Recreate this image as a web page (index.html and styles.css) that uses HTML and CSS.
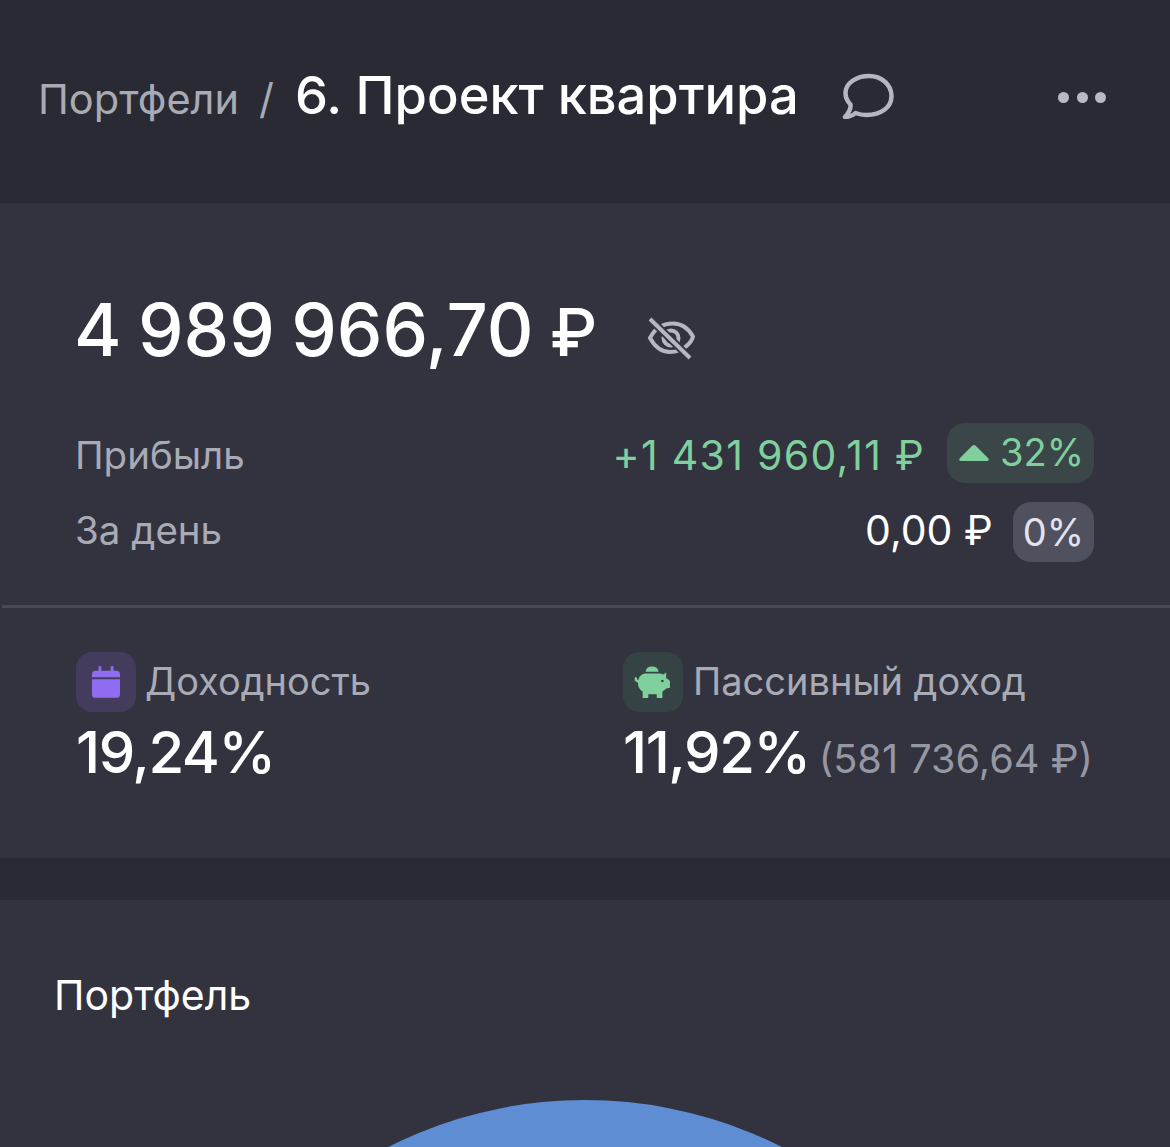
FILE: index.html
```html
<!DOCTYPE html>
<html lang="ru">
<head>
  <meta charset="UTF-8" />
  <title>Портфель</title>
  <link rel="stylesheet" href="styles.css">
</head>
<body>

  <!-- Header -->
  <div class="header">
    <span class="crumb">Портфели</span>
    <span class="slash">/</span>
    <span class="title">6. Проект квартира</span>
    <svg class="chat-icon" width="54" height="46" viewBox="0 0 54 46" fill="none">
      <path d="M3 44c4 0 7.500-1 10.500-4 3.500 1.300 7 2 11 2 14.500 0 25-7.500 25-19S39.500 3 27 3 3.500 10 3.500 20c0 4.500 1.500 8 5 11.500 .5 4-1.500 8-5.500 12.500z" stroke="#b5b7c0" stroke-width="4.500" stroke-linejoin="round"/>
    </svg>
    <div class="dots"><i></i><i></i><i></i></div>
  </div>

  <!-- Summary -->
  <div class="panel summary">
    <div class="total-row">
      <span class="total">4 989 966,70 <span class="rub">₽</span></span>
      <svg class="eye-icon" width="50" height="44" viewBox="0 0 50 44" fill="none" stroke="#b5b6c0">
        <path d="M3 21C8 11 16 6.500 26 6.500c8 0 15 4 20 13-1 4-3.500 7-6.500 9.500-5 4.500-10.500 6-16.500 6-9 0-15-5-20-14z" stroke-width="4"/>
        <circle cx="24" cy="21" r="7.500" stroke-width="4"/>
        <path d="M3 2l40 39" stroke="#32333e" stroke-width="8"/>
        <path d="M3 2l40 39" stroke-width="4"/>
      </svg>
    </div>

    <div class="stat-row profit-row">
      <span class="stat-label">Прибыль</span>
      <span class="stat-value green">+1 431 960,11 ₽</span>
      <span class="badge badge-green">
        <svg width="32" height="18" viewBox="0 0 32 18"><path d="M14 2q2-2 4 0L30 14q2 3-1 3H3q-3 0-1-3z" fill="#7fd09d"/></svg>
        <span class="badge-text">32%</span>
      </span>
    </div>
    <div class="stat-row day-row">
      <span class="stat-label">За день</span>
      <span class="stat-value">0,00 ₽</span>
      <span class="badge badge-gray"><span class="badge-text">0%</span></span>
    </div>

    <div class="divider"></div>

    <div class="metrics">
      <div class="metric metric-yield">
        <div class="metric-head">
          <span class="metric-icon icon-purple">
            <svg width="28" height="32" viewBox="0 0 30 34"><path d="M7 0h3v5h10V0h3v5h3q4 0 4 4v3H0V9q0-4 4-4h3zM0 14h30v16q0 4-4 4H4q-4 0-4-4z" fill="#8f6cf0"/></svg>
          </span>
          <span class="metric-label">Доходность</span>
        </div>
        <div class="metric-value">19,24%</div>
      </div>
      <div class="metric">
        <div class="metric-head">
          <span class="metric-icon icon-green">
            <svg width="38" height="32" viewBox="0 0 40 34" fill="#7fd09d">
              <path d="M12 6q1-5.500 7-5.500T26 6z"/>
              <path d="M11 8h15q3 0 5 1l3-2v6q3 1 4 3v7l-4 1q-2 2-4 3v7h-6v-4h-9v4h-6v-7q-5-3-5-9 0-8 7-10z"/>
              <path d="M6 16c-3 1-5-1-4-4" fill="none" stroke="#7fd09d" stroke-width="2.500"/>
              <circle cx="30" cy="16" r="1.300" fill="#2f3d3d"/>
            </svg>
          </span>
          <span class="metric-label">Пассивный доход</span>
        </div>
        <div class="metric-value">11,92% <small>(581 736,64 ₽)</small></div>
      </div>
    </div>
  </div>

  <!-- Portfolio -->
  <div class="panel portfolio">
    <h2>Портфель</h2>
    <div class="pie"></div>
  </div>

</body>
</html>
```

FILE: styles.css
```css
* {
  margin: 0;
  padding: 0;
  box-sizing: border-box;
  font-family: 'Inter', 'Noto Sans', sans-serif;
}

html, body {
  height: 100%;
  overflow: hidden;
}

body {
  background: #292a34;
  color: white;
}

.header {
  display: flex;
  align-items: center;
  height: 203px;
  padding: 0 64px 12px 38px;
  background: #292a33;
}

.crumb {
  font-size: 41.5px;
  color: #a9abb4;
  margin-top: 6px;
}

.slash {
  font-size: 41.5px;
  color: #a9abb4;
  margin: 6px 21px 0 20px;
}

.title {
  font-size: 52.4px;
  font-weight: 500;
  margin-bottom: 2px;
}

.chat-icon {
  margin-left: 43px;
}

.dots {
  display: flex;
  gap: 7.5px;
  margin: 3px 0 0 auto;
}

.dots i {
  width: 11px;
  height: 11px;
  border-radius: 50%;
  background: #b8bac3;
}

.panel {
  background: #32333e;
}

.summary {
  height: 655px;
  padding-top: 84px;
}

.total-row {
  display: flex;
  align-items: center;
  height: 84px;
  padding-left: 74px;
}

.total {
  font-size: 72.5px;
  font-weight: 500;
  word-spacing: -3px;
}

.total .rub {
  font-size: 66px;
}

.eye-icon {
  margin: 19px 0 0 50px;
}

.stat-row {
  display: flex;
  align-items: center;
  height: 60px;
  padding: 0 76px;
}

.profit-row {
  margin-top: 52px;
}

.day-row {
  margin-top: 19px;
}

.stat-label {
  font-size: 38.5px;
  color: #a8abb5;
  margin-left: -1px;
  margin-right: auto;
}

.profit-row .stat-label {
  margin-top: 4px;
}

.day-row .stat-label {
  margin-bottom: 4px;
}

.stat-value {
  font-size: 41px;
}

.profit-row .stat-value {
  margin-top: 4px;
}

.day-row .stat-value {
  margin-bottom: 4px;
  margin-right: -2px;
}

.green {
  color: #7fd09d;
  letter-spacing: 1.3px;
}

.badge {
  display: flex;
  align-items: center;
  gap: 10px;
  height: 60px;
  margin-left: 22px;
  padding: 0 10px 0 11px;
  border-radius: 18px;
  font-size: 38px;
}

.badge-green {
  background: #3a4648;
  color: #7fd09d;
}

.badge-green .badge-text {
  margin-bottom: 3px;
}

.badge-gray {
  padding-left: 10px;
  background: #50515f;
  color: #e2e3ee;
}

.divider {
  height: 3px;
  margin: 43px 0 0 2px;
  background: #484954;
}

.metrics {
  display: flex;
  padding: 44px 76px 0;
}

.metric-yield {
  flex: none;
  width: 547px;
}

.metric-head {
  display: flex;
  align-items: center;
  gap: 10px;
}

.metric-icon {
  display: flex;
  align-items: center;
  justify-content: center;
  width: 60px;
  height: 60px;
  border-radius: 16px;
}

.icon-purple {
  background: #433c5c;
}

.icon-green {
  background: #364345;
}

.metric-label {
  font-size: 38px;
  color: #a8abb5;
  margin-bottom: 2px;
}

.metric-yield .metric-label {
  margin-left: -1px;
}

.metric-value {
  font-size: 58px;
  font-weight: 500;
  line-height: 70px;
  letter-spacing: -1.4px;
  margin-top: 5px;
  white-space: nowrap;
}

.metric-value small {
  font-size: 39.7px;
  font-weight: 400;
  letter-spacing: 0;
  margin-left: -5px;
  color: #9598a3;
}

.portfolio {
  height: 300px;
  margin-top: 42px;
  padding: 70px 0 0 54px;
  overflow: hidden;
}

.portfolio h2 {
  font-size: 41px;
  font-weight: 400;
  line-height: 50px;
}

.pie {
  width: 872px;
  height: 872px;
  margin: 80px 0 0 95px;
  border-radius: 50%;
  background: #5f8dd3;
}
```
